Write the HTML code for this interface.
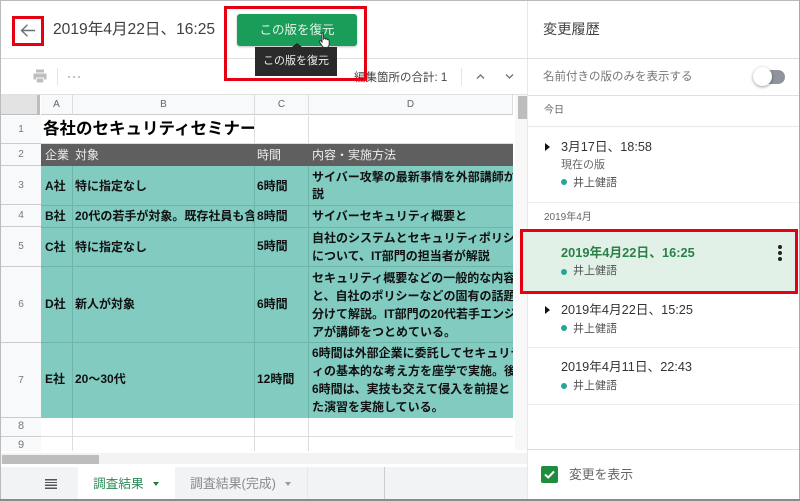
<!DOCTYPE html>
<html lang="ja"><head><meta charset="utf-8">
<style>
html,body{margin:0;padding:0;width:800px;height:501px;overflow:hidden;background:#fff}
body{position:relative;font-family:"Liberation Sans","Noto Sans CJK JP",sans-serif;color:#3c4043}
.a{position:absolute;white-space:nowrap}
.box{position:absolute;box-sizing:border-box}
.c{position:absolute;white-space:nowrap;overflow:hidden;font-size:12px;font-weight:700;color:#111;line-height:18px}
.rh{position:absolute;left:1px;width:40px;text-align:center;font-size:10px;color:#777;background:#f8f9fa;box-sizing:border-box;border-bottom:1px solid #ccc}
.ch{position:absolute;top:95px;height:20px;line-height:20px;text-align:center;font-size:10px;color:#666;background:#f8f9fa;border-right:1px solid #ddd;box-sizing:border-box;border-bottom:1px solid #ccc}
.hl{position:absolute;left:41px;width:472px;height:1px;background:#6fb3a9}
.vl{position:absolute;width:1px;background:#6fb3a9}
.dot{position:absolute;left:561px;width:6px;height:6px;border-radius:50%;background:#26a69a}
.name{position:absolute;left:573px;font-size:11px;color:#555;white-space:nowrap;line-height:14px}
.time{position:absolute;left:561px;font-size:12.7px;color:#333;white-space:nowrap;line-height:16px}
.tri{position:absolute;left:545px;width:0;height:0;border-left:5px solid #111;border-top:4px solid transparent;border-bottom:4px solid transparent}
</style></head><body>

<!-- header -->
<div class="box" style="left:0;top:58px;width:527px;height:1px;background:#e0e0e0"></div>
<svg class="box" style="left:18px;top:20px" width="20" height="20" viewBox="0 0 20 20"><path d="M17 10.500H3.500M9.500 4.800L3.500 10.500L9.500 16.200" fill="none" stroke="#6b6f73" stroke-width="1.400"/></svg>
<div class="a" style="left:53px;top:20px;font-size:15.6px;line-height:20px;color:#3c4043">2019年4月22日、16:25</div>

<div class="box" style="left:237px;top:14px;width:120px;height:32px;background:#1a9d58;border-radius:3px;box-shadow:0 1px 2px rgba(0,0,0,.25);color:#e6f4ea;font-size:12.5px;line-height:32px;text-align:center;">この版を復元</div>
<div class="box" style="left:255px;top:47px;width:82px;height:29px;background:#2a2a2a;color:#eee;font-size:11px;line-height:28px;text-align:center">この版を復元</div>
<div class="box" style="left:292px;top:43px;width:0;height:0;border-left:5px solid transparent;border-right:5px solid transparent;border-bottom:4px solid #2a2a2a"></div>
<svg class="box" style="left:318px;top:32px" width="14" height="17" viewBox="0 0 14 17"><path d="M4 1.500C4 .7 5.600 .7 5.600 1.500V7L6 6.500C7 6 7.600 6.500 7.600 7C8.500 6.500 9.300 7 9.300 7.600C10.300 7.200 11.200 8 11.200 9V12C11.200 14 10 15.500 8.500 15.500H6.500C5.500 15.500 4.800 15 4.200 14L1.500 10C1 9 2 8.200 3 9L4 10Z" fill="#fff" stroke="#333" stroke-width="1"/></svg>

<!-- toolbar -->
<svg class="box" style="left:32px;top:68px" width="16" height="16" viewBox="0 0 16 16"><path d="M4 1.500H12V4.500H4ZM1.500 5.500H14.500V11.500H12V9.500H4V11.500H1.500ZM4.800 10.500H11.200V14.500H4.800Z" fill="#bcbec0"/></svg>
<div class="box" style="left:57px;top:68px;width:1px;height:18px;background:#e6e6e6"></div>
<div class="box" style="left:68px;top:76px;width:2px;height:2px;background:#c4c4c4;box-shadow:5px 0 #c4c4c4,10px 0 #c4c4c4"></div>
<div class="a" style="left:354px;top:70px;font-size:11.5px;line-height:16px;color:#444">編集箇所の合計: 1</div>
<div class="box" style="left:461px;top:68px;width:1px;height:18px;background:#e6e6e6"></div>
<svg class="box" style="left:476px;top:72px" width="9" height="9" viewBox="0 0 9 9"><path d="M1 6.500L4.500 3L8 6.500" fill="none" stroke="#6b6f73" stroke-width="1.300"/></svg>
<svg class="box" style="left:505px;top:72px" width="9" height="9" viewBox="0 0 9 9"><path d="M1 2.500L4.500 6L8 2.500" fill="none" stroke="#6b6f73" stroke-width="1.300"/></svg>

<!-- sheet -->
<div class="box" style="left:0;top:94px;width:527px;height:1px;background:#e0e0e0"></div>
<div class="box" style="left:1px;top:95px;width:39px;height:20px;background:#e3e3e3;border-right:3px solid #bdbdbd;border-bottom:1px solid #bdbdbd"></div>
<div class="ch" style="left:41px;width:32px">A</div>
<div class="ch" style="left:73px;width:182px">B</div>
<div class="ch" style="left:255px;width:54px">C</div>
<div class="ch" style="left:309px;width:204px">D</div>

<div class="rh" style="top:116px;height:28px;line-height:28px">1</div>
<div class="rh" style="top:144px;height:22px;line-height:22px">2</div>
<div class="rh" style="top:166px;height:39px;line-height:39px">3</div>
<div class="rh" style="top:205px;height:22px;line-height:22px">4</div>
<div class="rh" style="top:227px;height:40px;line-height:40px">5</div>
<div class="rh" style="top:267px;height:76px;line-height:76px">6</div>
<div class="rh" style="top:343px;height:75px;line-height:75px">7</div>
<div class="rh" style="top:418px;height:19px;line-height:17px;font-size:11px">8</div>
<div class="rh" style="top:437px;height:14px;line-height:16px;font-size:11px;border:0">9</div>

<!-- row 1 -->
<div class="c" style="left:43px;top:116px;width:211px;height:28px;font-size:16.500px;line-height:26px;color:#000">各社のセキュリティセミナー</div>
<div class="box" style="left:41px;top:143px;width:472px;height:1px;background:#ddd"></div>
<div class="box" style="left:254px;top:116px;width:1px;height:28px;background:#ddd"></div>
<div class="box" style="left:308px;top:116px;width:1px;height:28px;background:#ddd"></div>
<!-- row 2 -->
<div class="box" style="left:41px;top:144px;width:472px;height:22px;background:#5f5f5f"></div>
<div class="c" style="left:45px;top:146px;font-weight:400;color:#eee;font-size:12px">企業</div>
<div class="c" style="left:75px;top:146px;font-weight:400;color:#eee;font-size:12px">対象</div>
<div class="c" style="left:257px;top:146px;font-weight:400;color:#eee;font-size:12px">時間</div>
<div class="c" style="left:312px;top:146px;font-weight:400;color:#eee;font-size:12px">内容・実施方法</div>

<!-- teal -->
<div class="box" style="left:41px;top:166px;width:472px;height:252px;background:#82cbc1"></div>
<div class="hl" style="top:205px"></div><div class="hl" style="top:227px"></div><div class="hl" style="top:266px"></div><div class="hl" style="top:342px"></div>
<div class="vl" style="left:72px;top:166px;height:252px"></div><div class="vl" style="left:254px;top:166px;height:252px"></div><div class="vl" style="left:308px;top:166px;height:252px"></div>

<div class="c" style="left:45px;top:177px">A社</div>
<div class="c" style="left:75px;top:177px">特に指定なし</div>
<div class="c" style="left:257px;top:177px">6時間</div>
<div class="c" style="left:312px;top:169px;width:201px;line-height:17px">サイバー攻撃の最新事情を外部講師か<br>説</div>

<div class="c" style="left:45px;top:207px">B社</div>
<div class="c" style="left:75px;top:207px;width:179px">20代の若手が対象。既存社員も含</div>
<div class="c" style="left:257px;top:207px">8時間</div>
<div class="c" style="left:312px;top:207px">サイバーセキュリティ概要と</div>

<div class="c" style="left:45px;top:238px">C社</div>
<div class="c" style="left:75px;top:238px">特に指定なし</div>
<div class="c" style="left:257px;top:237px">5時間</div>
<div class="c" style="left:312px;top:229px;width:201px">自社のシステムとセキュリティポリシ<br>について、IT部門の担当者が解説</div>

<div class="c" style="left:45px;top:295px">D社</div>
<div class="c" style="left:75px;top:295px">新人が対象</div>
<div class="c" style="left:257px;top:295px">6時間</div>
<div class="c" style="left:312px;top:269px;width:201px">セキュリティ概要などの一般的な内容<br>と、自社のポリシーなどの固有の話題<br>分けて解説。IT部門の20代若手エンジ<br>アが講師をつとめている。</div>

<div class="c" style="left:45px;top:370px">E社</div>
<div class="c" style="left:75px;top:370px">20～30代</div>
<div class="c" style="left:257px;top:370px">12時間</div>
<div class="c" style="left:312px;top:344px;width:201px">6時間は外部企業に委託してセキュリテ<br>ィの基本的な考え方を座学で実施。後<br>6時間は、実技も交えて侵入を前提と<br>た演習を実施している。</div>

<!-- rows 8,9 grid -->
<div class="box" style="left:41px;top:436px;width:472px;height:1px;background:#ddd"></div>
<div class="box" style="left:72px;top:418px;width:1px;height:33px;background:#ddd"></div>
<div class="box" style="left:254px;top:418px;width:1px;height:33px;background:#ddd"></div>
<div class="box" style="left:308px;top:418px;width:1px;height:33px;background:#ddd"></div>

<!-- scrollbars -->
<div class="box" style="left:515px;top:95px;width:12px;height:355px;background:#f8f8f8"></div>
<div class="box" style="left:518px;top:96px;width:9px;height:23px;background:#bdbdbd"></div>
<div class="box" style="left:1px;top:453px;width:526px;height:11px;background:#f3f3f3"></div>
<div class="box" style="left:2px;top:455px;width:97px;height:9px;background:#bdbdbd"></div>

<!-- tabs -->
<div class="box" style="left:1px;top:467px;width:526px;height:32px;background:#f1f3f4"></div>
<div class="box" style="left:45px;top:479px;width:12px;height:10px;background:repeating-linear-gradient(#555 0 1.400px,#f1f3f4 1.400px 2.800px)"></div>
<div class="box" style="left:78px;top:467px;width:97px;height:32px;background:#fff;color:#2e8b57;font-size:12.700px;line-height:34px;padding-left:15px">調査結果</div>
<div class="box" style="left:153px;top:482px;width:0;height:0;border-top:4px solid #1e7e45;border-left:3.500px solid transparent;border-right:3.500px solid transparent"></div>
<div class="a" style="left:190px;top:467px;font-size:12.900px;line-height:34px;color:#8a8a8a">調査結果(完成)</div>
<div class="box" style="left:285px;top:482px;width:0;height:0;border-top:4px solid #999;border-left:3.500px solid transparent;border-right:3.500px solid transparent"></div>
<div class="box" style="left:307px;top:467px;width:1px;height:32px;background:#e8e8e8"></div>
<div class="box" style="left:384px;top:467px;width:1px;height:32px;background:#ccc"></div>

<!-- right panel -->
<div class="box" style="left:527px;top:0;width:272px;height:500px;background:#fff;border-left:1px solid #e8e8e8"></div>
<div class="a" style="left:543px;top:20px;font-size:14.200px;line-height:20px;color:#444">変更履歴</div>
<div class="box" style="left:527px;top:58px;width:272px;height:1px;background:#e0e0e0"></div>
<div class="a" style="left:543px;top:69px;font-size:11.500px;line-height:16px;color:#777">名前付きの版のみを表示する</div>
<div class="box" style="left:757px;top:70px;width:28px;height:14px;border-radius:7px;background:#8f939c"></div>
<div class="box" style="left:753px;top:67px;width:19px;height:19px;border-radius:50%;background:#fff;box-shadow:0 1px 3px rgba(0,0,0,.4)"></div>
<div class="box" style="left:527px;top:95px;width:272px;height:1px;background:#e0e0e0"></div>
<div class="a" style="left:544px;top:104px;font-size:10px;line-height:14px;color:#666">今日</div>
<div class="box" style="left:527px;top:126px;width:272px;height:1px;background:#e8e8e8"></div>

<div class="tri" style="top:143px"></div>
<div class="time" style="top:139px">3月17日、18:58</div>
<div class="a" style="left:561px;top:158px;font-size:11px;line-height:14px;color:#666">現在の版</div>
<div class="dot" style="top:179px"></div><div class="name" style="top:176px">井上健語</div>
<div class="box" style="left:527px;top:202px;width:272px;height:1px;background:#eee"></div>
<div class="a" style="left:544px;top:211px;font-size:10px;line-height:14px;color:#666">2019年4月</div>

<div class="box" style="left:522px;top:231px;width:275px;height:62px;background:#e1f1e8"></div>
<div class="time" style="top:245px;font-weight:700;color:#2a8048;font-size:12.800px">2019年4月22日、16:25</div>
<div class="dot" style="top:269px"></div><div class="name" style="top:264px">井上健語</div>
<div class="box" style="left:778px;top:245px;width:4px;height:4px;border-radius:50%;background:#222;box-shadow:0 6px #222,0 12px #222"></div>

<div class="tri" style="top:306px"></div>
<div class="time" style="top:302px">2019年4月22日、15:25</div>
<div class="dot" style="top:325px"></div><div class="name" style="top:322px">井上健語</div>
<div class="box" style="left:527px;top:347px;width:272px;height:1px;background:#eee"></div>

<div class="time" style="top:359px">2019年4月11日、22:43</div>
<div class="dot" style="top:383px"></div><div class="name" style="top:379px">井上健語</div>
<div class="box" style="left:527px;top:404px;width:272px;height:1px;background:#eee"></div>
<div class="box" style="left:527px;top:449px;width:272px;height:1px;background:#ddd"></div>

<div class="box" style="left:541px;top:466px;width:17px;height:17px;background:#1e8e3e;border-radius:2px"></div>
<svg class="box" style="left:541px;top:466px" width="17" height="17" viewBox="0 0 17 17"><path d="M4 8.500L7.200 11.500L13 5.500" fill="none" stroke="#fff" stroke-width="2"/></svg>
<div class="a" style="left:569px;top:466px;font-size:12.800px;line-height:17px;color:#666">変更を表示</div>

<!-- red boxes -->
<div class="box" style="left:12px;top:16px;width:32px;height:30px;border:3px solid #e60012"></div>
<div class="box" style="left:224px;top:6px;width:143px;height:75px;border:3px solid #e60012"></div>
<div class="box" style="left:520px;top:229px;width:278px;height:65px;border:3px solid #e60012"></div>

<!-- outer frame -->
<div class="box" style="left:0;top:0;width:800px;height:1px;background:#bbb"></div>
<div class="box" style="left:0;top:0;width:1px;height:501px;background:#bbb"></div>
<div class="box" style="left:799px;top:0;width:1px;height:501px;background:#aaa"></div>
<div class="box" style="left:0;top:499px;width:800px;height:2px;background:#8a8a8a"></div>
</body></html>
